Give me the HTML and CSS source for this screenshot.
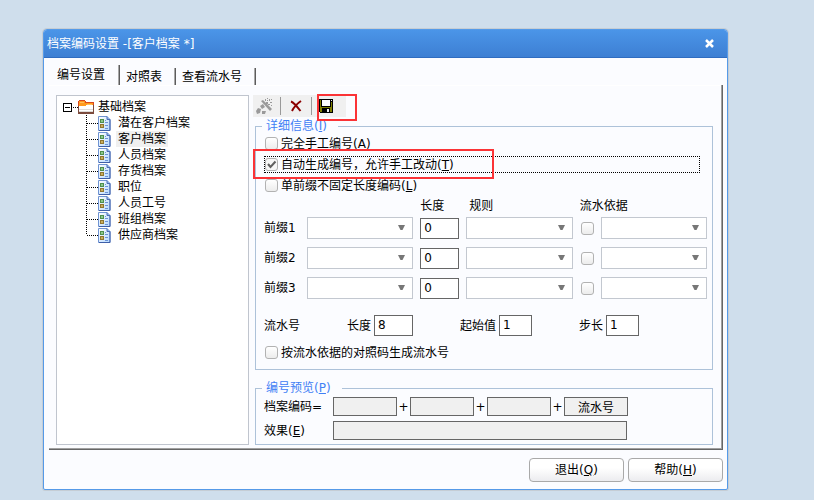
FILE: index.html
```
<!DOCTYPE html>
<html lang="zh-CN">
<head>
  <meta charset="UTF-8" />
  <meta name="viewport" content="width=device-width, initial-scale=1.0"/>
  <title>档案编码设置</title>
  <link rel="stylesheet" href="styles.css">
</head>
<body>
  <svg width="0" height="0" class="sprite" aria-hidden="true">
    <defs>
      <linearGradient id="page-fill" x1="0" y1="0" x2="1" y2="1">
        <stop offset="0" stop-color="#ffffff"/>
        <stop offset="1" stop-color="#b4d8ff"/>
      </linearGradient>
    </defs>
    <symbol id="doc" viewBox="0 0 13 15">
      <path d="M.5.5h8.500l3 3v11H.5z" fill="url(#page-fill)" stroke="#6f93d2"/>
      <path d="M12 3.500v11H1" fill="none" stroke="#3f5fa8"/>
      <path d="M9 .5v3h3" fill="#8fb2ea" stroke="#4c6fb5"/>
      <path d="M2 3h4v4H2z" fill="#4f8f4f"/>
      <path d="M3 4h2v2H3z" fill="#8cc88c"/>
      <path d="M2 8h4v4H2z" fill="#8f7632"/>
      <path d="M3 9h2v2H3z" fill="#c9ad5c"/>
      <path d="M7 4h1v1H7zM7 6h3v1H7zM7 9h3v1H7zM7 12h3v1H7z" fill="#6c94d8"/>
    </symbol>
  </svg>

  <main class="dialog">
    <header class="titlebar">
      <h1>档案编码设置 -[客户档案 *]</h1>
      <button type="button" class="close" aria-label="关闭">
        <svg width="9" height="9" viewBox="0 0 9 9"><path d="M1 1l7 7M8 1L1 8" stroke="#fff" stroke-width="2.500"/></svg>
      </button>
    </header>

    <div class="tabs" role="tablist">
      <button type="button" role="tab" class="tab active" aria-selected="true">编号设置</button>
      <button type="button" role="tab" class="tab">对照表</button>
      <button type="button" role="tab" class="tab">查看流水号</button>
    </div>

    <div class="pane">
      <nav class="tree" aria-label="基础档案">
        <div class="root">
          <svg width="15" height="9" viewBox="0 0 15 9" shape-rendering="crispEdges">
            <path d="M.5.5h8v8h-8z" fill="#fff" stroke="#000"/>
            <path d="M2 4.500h5" stroke="#000"/>
            <path d="M10 4.500h5" stroke="#000" stroke-dasharray="1 1"/>
          </svg>
          <svg width="16" height="14" viewBox="0 0 16 14" shape-rendering="crispEdges">
            <path d="M0 1h1V0h6v1h1v1h8v5H0z" fill="#d9481f"/>
            <path d="M1 1h6v2h8v4H1z" fill="#ff9a1e"/>
            <path d="M2 2h4v1H2zM9 4h5v1H9z" fill="#ffc05e"/>
            <path d="M0 6h7l1-1h8v9H0z" fill="#7b4a3c"/>
            <path d="M1 6h6l1-1h7v7H1z" fill="#fff"/>
            <path d="M1 9h14v1H1zM1 11h14v1H1z" fill="#dedbd8"/>
          </svg>
          <span>基础档案</span>
        </div>
        <ul>
          <li><svg width="13" height="15"><use href="#doc"/></svg><span>潜在客户档案</span></li>
          <li class="selected"><svg width="13" height="15"><use href="#doc"/></svg><span>客户档案</span></li>
          <li><svg width="13" height="15"><use href="#doc"/></svg><span>人员档案</span></li>
          <li><svg width="13" height="15"><use href="#doc"/></svg><span>存货档案</span></li>
          <li><svg width="13" height="15"><use href="#doc"/></svg><span>职位</span></li>
          <li><svg width="13" height="15"><use href="#doc"/></svg><span>人员工号</span></li>
          <li><svg width="13" height="15"><use href="#doc"/></svg><span>班组档案</span></li>
          <li><svg width="13" height="15"><use href="#doc"/></svg><span>供应商档案</span></li>
        </ul>
      </nav>

      <div class="content">
        <div class="toolbar">
          <button type="button" class="tool" aria-label="生成" disabled>
            <svg width="17" height="17" viewBox="0 0 17 17" fill="#9a9a9a">
              <path d="M5 3l2-1 9 9-2 2z"/>
              <path d="M4 8l3-2 2 3-3 2zM0 13l2-3 3 1-1 4-3 1zM6 13h4l-1 3H6z"/>
              <path d="M10 4h2v2h-2zM13 1h1v2h-1zM14 4h2v1h-2zM12 6h2v1h-2zM9 1h1v2H9zM11 2h1v1h-1zM15 7h1v1h-1zM11 0h1v1h-1zM15 1h1v1h-1z"/>
            </svg>
          </button>
          <span class="divider"></span>
          <button type="button" class="tool" aria-label="删除">
            <svg width="12" height="12" viewBox="0 0 12 12"><path d="M1 1.500q3 1 9.500 9.500M11 1Q5 5 2 11" fill="none" stroke="#8b0000" stroke-width="2"/></svg>
          </button>
          <span class="divider"></span>
          <button type="button" class="tool save" aria-label="保存">
            <svg width="14" height="14" viewBox="0 0 14 14" shape-rendering="crispEdges">
              <path d="M0 0h14v14H1v-1H0z" fill="#000"/>
              <path d="M1 1h1v7h10V3h1v10h-2V9H3v4H1z" fill="#808000"/>
              <path d="M3 1h8v6H3z" fill="#fff"/>
              <path d="M12 1h1v1h-1zM8 10h2v3H8z" fill="#f0f0f0"/>
            </svg>
          </button>
        </div>

        <fieldset class="group details">
          <legend>详细信息(<u>I</u>)</legend>

          <label class="option"><input type="checkbox"><span>完全手工编号(<u>A</u>)</span></label>
          <label class="option focused"><input type="checkbox" checked><span>自动生成编号，允许手工改动(<u>T</u>)</span></label>
          <label class="option"><input type="checkbox"><span>单前缀不固定长度编码(<u>L</u>)</span></label>

          <div class="prefixes">
            <span class="head head-length">长度</span>
            <span class="head head-rule">规则</span>
            <span class="head head-basis">流水依据</span>

            <label for="prefix1">前缀1</label>
            <select id="prefix1"></select>
            <input type="text" value="0" aria-label="前缀1长度">
            <select aria-label="前缀1规则"></select>
            <input type="checkbox" aria-label="前缀1流水">
            <select aria-label="前缀1流水依据"></select>

            <label for="prefix2">前缀2</label>
            <select id="prefix2"></select>
            <input type="text" value="0" aria-label="前缀2长度">
            <select aria-label="前缀2规则"></select>
            <input type="checkbox" aria-label="前缀2流水">
            <select aria-label="前缀2流水依据"></select>

            <label for="prefix3">前缀3</label>
            <select id="prefix3"></select>
            <input type="text" value="0" aria-label="前缀3长度">
            <select aria-label="前缀3规则"></select>
            <input type="checkbox" aria-label="前缀3流水">
            <select aria-label="前缀3流水依据"></select>
          </div>

          <div class="serial">
            <span>流水号</span>
            <label>长度<input type="text" class="wide" value="8"></label>
            <label>起始值<input type="text" value="1"></label>
            <label>步长<input type="text" value="1"></label>
          </div>

          <label class="option"><input type="checkbox"><span>按流水依据的对照码生成流水号</span></label>
        </fieldset>

        <fieldset class="group preview">
          <legend>编号预览(<u>P</u>)</legend>
          <div class="line">
            <label for="code1">档案编码=</label>
            <input type="text" id="code1" readonly>
            <span class="plus">+</span>
            <input type="text" aria-label="第二段" readonly>
            <span class="plus">+</span>
            <input type="text" aria-label="第三段" readonly>
            <span class="plus">+</span>
            <input type="text" aria-label="第四段" value="流水号" readonly>
          </div>
          <div class="line">
            <label for="effect">效果(<u>E</u>)</label>
            <input type="text" id="effect" class="effect" readonly>
          </div>
        </fieldset>
      </div>
    </div>

    <footer class="actions">
      <button type="button">退出(<u>Q</u>)</button>
      <button type="button">帮助(<u>H</u>)</button>
    </footer>
  </main>
</body>
</html>
```
FILE: styles.css
```
*,
*::before,
*::after {
  box-sizing: border-box;
}

body {
  margin: 0;
  padding: 29px 86px 9px 43px;
  background: #cfdeec;
  color: #000;
}

body, button, input, select {
  font-family: "DejaVu Sans", "Noto Sans CJK SC", sans-serif;
  font-size: 12px;
  line-height: 16px;
}

button, input, select {
  color: #000;
}

.sprite {
  position: absolute;
}

.dialog {
  min-width: 685px;
  border: 1px solid #559ae8;
  border-radius: 4px 4px 2px 2px;
  background: #fbfcff;
  box-shadow: 0 0 0 1px #c5cdd5;
}

/* title bar */
.titlebar {
  display: flex;
  align-items: center;
  justify-content: space-between;
  height: 28px;
  padding: 0 13px 0 3px;
  border-bottom: 1px solid #2f6cc0;
  border-radius: 3px 3px 0 0;
  background: linear-gradient(#4b95e8, #3d7fd3);
}

.titlebar h1 {
  margin: 0;
  color: #fff;
  font-size: 12px;
  font-weight: normal;
}

.close {
  display: flex;
  padding: 0;
  border: 0;
  background: none;
}

/* tabs */
.tabs {
  display: flex;
  align-items: flex-end;
  height: 27px;
  padding-left: 5px;
}

.tab {
  height: 17px;
  padding: 0 13px 0 6px;
  border: 0;
  border-right: 1px solid #5c5c5c;
  background: none;
  box-shadow: inset -1px 0 #a8a8a8;
  white-space: nowrap;
}

.tab.active {
  height: 20px;
  padding: 0 14px 0 8px;
}

.pane {
  display: flex;
  gap: 4px;
  margin: 0 4px 0 5px;
  padding: 10px 9px 4px 7px;
  border: solid #666;
  border-width: 0 1px 1px 0;
  box-shadow: inset -1px -1px #a0a0a0, inset 0 1px #fff;
}

/* tree */
.tree {
  flex: none;
  width: 193px;
  padding: 3px 6px;
  border: 1px solid #c0c5ce;
  background: #fff;
}

.root {
  display: flex;
  align-items: center;
  height: 16px;
}

.root span {
  margin-left: 4px;
}

.tree ul {
  margin: 0 0 0 23px;
  padding: 0;
  list-style: none;
}

.tree li {
  display: flex;
  align-items: center;
  gap: 5px;
  height: 16px;
  padding-left: 1px;
  background: repeating-linear-gradient(#000 0 1px, transparent 1px 2px) left top / 1px 100% no-repeat;
}

.tree li:last-child {
  background-size: 1px 8px;
}

.tree li::before {
  content: "";
  width: 11px;
  margin-right: -5px;
  border-top: 1px dotted #000;
}

.tree li span {
  padding: 0 2px;
}

.tree .selected span {
  background: #f0f0f0;
}

/* toolbar */
.content {
  flex: 1;
  min-width: 0;
}

.toolbar {
  display: flex;
  align-items: center;
  width: 93px;
  height: 22px;
  margin-bottom: 1px;
  background: #f0f0f0;
}

.tool {
  display: flex;
  align-items: center;
  justify-content: center;
  width: 27px;
  height: 22px;
  padding: 0 4px 0 0;
  border: 0;
  background: none;
}

.divider {
  width: 1px;
  height: 18px;
  background: #999;
}

.divider + .tool {
  width: 30px;
  padding: 0;
}

.divider + .save {
  position: relative;
  justify-content: flex-start;
  width: 34px;
  padding-left: 7px;
}

/* red marks around the save button and the chosen option */
.save::after,
.focused::after {
  content: "";
  position: absolute;
  border: 2px solid #fb3336;
}

.save::after {
  top: -1px;
  left: 5px;
  width: 40px;
  height: 27px;
}

.focused::after {
  top: -7px;
  left: -11px;
  width: 241px;
  height: 30px;
}

/* groups */
.group {
  min-width: 0;
  margin: 0 0 0 2px;
  padding: 1px 5px 8px 8px;
  border: 1px solid #adc2d9;
}

.group legend {
  margin-left: -2px;
  padding: 0 11px 0 4px;
  color: #3f80f5;
}

.option {
  display: flex;
  align-items: center;
  gap: 3px;
  height: 17px;
  margin: 0 7px 4px 0;
  padding-left: 1px;
}

.option:last-child {
  margin-bottom: 0;
}

.focused {
  position: relative;
  outline: 1px dotted #000;
  outline-offset: -1px;
}

input[type="checkbox"] {
  appearance: none;
  flex: none;
  width: 13px;
  height: 13px;
  margin: 0;
  border: 1px solid #b2b2b2;
  border-radius: 3px;
  background: linear-gradient(#fff, #ececec);
}

input[type="checkbox"]:checked {
  background: #f6f6f6 url("data:image/svg+xml,%3Csvg xmlns='http://www.w3.org/2000/svg' viewBox='0 0 11 11'%3E%3Cpath d='M2 5l2.500 3L9.500 2.500' fill='none' stroke='%23606060' stroke-width='2'/%3E%3C/svg%3E") center / 11px 11px no-repeat;
}

input[type="text"] {
  width: 33px;
  height: 21px;
  padding: 0 3px 2px;
  border: 1px solid #666;
  border-radius: 0;
  background: #fff;
}

select {
  appearance: none;
  width: 100%;
  height: 22px;
  border: 1px solid #c3c8d0;
  border-radius: 0;
  background: #fff url("data:image/svg+xml,%3Csvg xmlns='http://www.w3.org/2000/svg' viewBox='0 0 7 6'%3E%3Cpath d='M0 0h7L4.500 5h-2z' fill='%23777'/%3E%3C/svg%3E") right 7px top 7px / 7px 6px no-repeat;
}

.prefixes {
  display: grid;
  grid-template-columns: 36px 1fr 39px 1fr 14px 1fr;
  align-items: center;
  gap: 8px 7px;
}

.prefixes input[type="text"] {
  width: 100%;
  align-self: end;
}

.prefixes input[type="checkbox"] {
  justify-self: end;
}

.prefixes label {
  white-space: nowrap;
}

.head {
  margin-bottom: -5px;
}

.head-length {
  grid-column: 3;
}

.head-rule {
  grid-column: 4;
  padding-left: 3px;
}

.head-basis {
  grid-column: 5 / 7;
}

.serial {
  display: flex;
  align-items: center;
  gap: 47px;
  margin: 16px 0 8px;
}

.serial label {
  display: flex;
  align-items: center;
  gap: 3px;
}

.serial input.wide {
  width: 39px;
}

.preview {
  margin-top: 10px;
  padding-bottom: 4px;
}

.line {
  display: flex;
  align-items: center;
}

.line + .line {
  margin-top: 5px;
}

.line label {
  width: 69px;
  white-space: nowrap;
}

.line input[type="text"] {
  width: 64px;
  height: 19px;
  padding: 0;
  background: #f0f0f0;
  text-align: center;
}

.line input.effect {
  width: 294px;
}

.plus {
  width: 13px;
  text-align: center;
}

/* bottom buttons */
.actions {
  display: flex;
  justify-content: flex-end;
  gap: 4px;
  padding: 8px 4px 7px;
}

.actions button {
  width: 95px;
  height: 24px;
  padding: 0;
  border: 1px solid #a9a9a9;
  border-radius: 4px;
  background: linear-gradient(#fff 40%, #ececef);
}
```
